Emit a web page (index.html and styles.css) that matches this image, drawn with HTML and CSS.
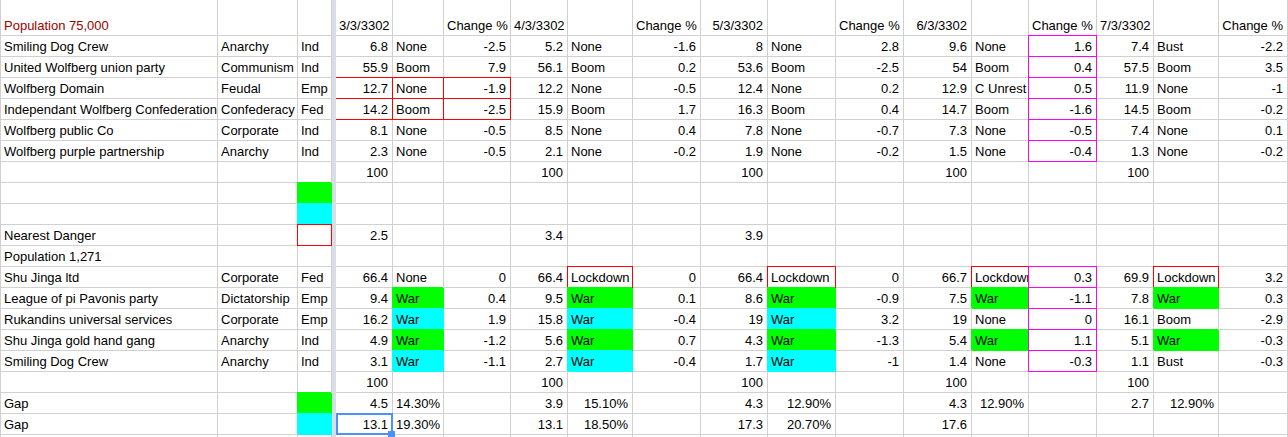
FILE: index.html
```html
<!DOCTYPE html>
<html lang="en">
<head>
<meta charset="utf-8">
<title>Wolfberg influence sheet</title>
<link rel="stylesheet" href="styles.css">
</head>
<body>
<table class="sheet">
<colgroup>
<col class="a"><col class="b"><col class="c"><col class="z"><col class="d"><col class="e"><col class="f"><col class="g"><col class="h"><col class="i"><col class="j"><col class="k"><col class="l"><col class="m"><col class="n"><col class="o"><col class="p"><col class="q"><col class="r">
</colgroup>
<tbody>
<tr class="head"><td class="first pop">Population 75,000</td><td></td><td></td><td class="z"></td><td class="n">3/3/3302</td><td></td><td class="n">Change %</td><td class="n">4/3/3302</td><td></td><td class="n">Change %</td><td class="n">5/3/3302</td><td></td><td class="n">Change %</td><td class="n">6/3/3302</td><td></td><td class="n">Change %</td><td class="n">7/3/3302</td><td></td><td class="n">Change %</td></tr>
<tr><td class="first">Smiling Dog Crew</td><td>Anarchy</td><td>Ind</td><td class="z"></td><td class="n">6.8</td><td>None</td><td class="n">-2.5</td><td class="n">5.2</td><td>None</td><td class="n">-1.6</td><td class="n">8</td><td>None</td><td class="n">2.8</td><td class="n">9.6</td><td>None</td><td class="n pk">1.6</td><td class="n">7.4</td><td>Bust</td><td class="n">-2.2</td></tr>
<tr><td class="first">United Wolfberg union party</td><td>Communism</td><td>Ind</td><td class="z"></td><td class="n">55.9</td><td>Boom</td><td class="n">7.9</td><td class="n">56.1</td><td>Boom</td><td class="n">0.2</td><td class="n">53.6</td><td>Boom</td><td class="n">-2.5</td><td class="n">54</td><td>Boom</td><td class="n pk">0.4</td><td class="n">57.5</td><td>Boom</td><td class="n">3.5</td></tr>
<tr><td class="first">Wolfberg Domain</td><td>Feudal</td><td>Emp</td><td class="z"></td><td class="n rd edge">12.7</td><td class="rd">None</td><td class="n rd">-1.9</td><td class="n">12.2</td><td>None</td><td class="n">-0.5</td><td class="n">12.4</td><td>None</td><td class="n">0.2</td><td class="n">12.9</td><td>C Unrest</td><td class="n pk">0.5</td><td class="n">11.9</td><td>None</td><td class="n">-1</td></tr>
<tr><td class="first">Independant Wolfberg Confederation</td><td>Confederacy</td><td>Fed</td><td class="z"></td><td class="n rd edge">14.2</td><td class="rd">Boom</td><td class="n rd">-2.5</td><td class="n">15.9</td><td>Boom</td><td class="n">1.7</td><td class="n">16.3</td><td>Boom</td><td class="n">0.4</td><td class="n">14.7</td><td>Boom</td><td class="n pk">-1.6</td><td class="n">14.5</td><td>Boom</td><td class="n">-0.2</td></tr>
<tr><td class="first">Wolfberg public Co</td><td>Corporate</td><td>Ind</td><td class="z"></td><td class="n">8.1</td><td>None</td><td class="n">-0.5</td><td class="n">8.5</td><td>None</td><td class="n">0.4</td><td class="n">7.8</td><td>None</td><td class="n">-0.7</td><td class="n">7.3</td><td>None</td><td class="n pk">-0.5</td><td class="n">7.4</td><td>None</td><td class="n">0.1</td></tr>
<tr><td class="first">Wolfberg purple partnership</td><td>Anarchy</td><td>Ind</td><td class="z"></td><td class="n">2.3</td><td>None</td><td class="n">-0.5</td><td class="n">2.1</td><td>None</td><td class="n">-0.2</td><td class="n">1.9</td><td>None</td><td class="n">-0.2</td><td class="n">1.5</td><td>None</td><td class="n pk">-0.4</td><td class="n">1.3</td><td>None</td><td class="n">-0.2</td></tr>
<tr><td class="first"></td><td></td><td></td><td class="z"></td><td class="n">100</td><td></td><td></td><td class="n">100</td><td></td><td></td><td class="n">100</td><td></td><td></td><td class="n">100</td><td></td><td></td><td class="n">100</td><td></td><td></td></tr>
<tr><td class="first"></td><td></td><td class="gr"></td><td class="z"></td><td></td><td></td><td></td><td></td><td></td><td></td><td></td><td></td><td></td><td></td><td></td><td></td><td></td><td></td><td></td></tr>
<tr><td class="first"></td><td></td><td class="cy"></td><td class="z"></td><td></td><td></td><td></td><td></td><td></td><td></td><td></td><td></td><td></td><td></td><td></td><td></td><td></td><td></td><td></td></tr>
<tr><td class="first">Nearest Danger</td><td></td><td class="rd"></td><td class="z"></td><td class="n">2.5</td><td></td><td></td><td class="n">3.4</td><td></td><td></td><td class="n">3.9</td><td></td><td></td><td></td><td></td><td></td><td></td><td></td><td></td></tr>
<tr><td class="first">Population 1,271</td><td></td><td></td><td class="z"></td><td></td><td></td><td></td><td></td><td></td><td></td><td></td><td></td><td></td><td></td><td></td><td></td><td></td><td></td><td></td></tr>
<tr><td class="first">Shu Jinga ltd</td><td>Corporate</td><td>Fed</td><td class="z"></td><td class="n">66.4</td><td>None</td><td class="n">0</td><td class="n">66.4</td><td class="rd">Lockdown</td><td class="n">0</td><td class="n">66.4</td><td class="rd">Lockdown</td><td class="n">0</td><td class="n">66.7</td><td class="rd"><span class="clip">Lockdown</span></td><td class="n pk">0.3</td><td class="n">69.9</td><td class="rd">Lockdown</td><td class="n">3.2</td></tr>
<tr><td class="first">League of pi Pavonis party</td><td>Dictatorship</td><td>Emp</td><td class="z"></td><td class="n">9.4</td><td class="gr">War</td><td class="n">0.4</td><td class="n">9.5</td><td class="gr">War</td><td class="n">0.1</td><td class="n">8.6</td><td class="gr">War</td><td class="n">-0.9</td><td class="n">7.5</td><td class="gr">War</td><td class="n pk">-1.1</td><td class="n">7.8</td><td class="gr">War</td><td class="n">0.3</td></tr>
<tr><td class="first">Rukandins universal services</td><td>Corporate</td><td>Emp</td><td class="z"></td><td class="n">16.2</td><td class="cy">War</td><td class="n">1.9</td><td class="n">15.8</td><td class="cy">War</td><td class="n">-0.4</td><td class="n">19</td><td class="cy">War</td><td class="n">3.2</td><td class="n">19</td><td>None</td><td class="n pk">0</td><td class="n">16.1</td><td>Boom</td><td class="n">-2.9</td></tr>
<tr><td class="first">Shu Jinga gold hand gang</td><td>Anarchy</td><td>Ind</td><td class="z"></td><td class="n">4.9</td><td class="gr">War</td><td class="n">-1.2</td><td class="n">5.6</td><td class="gr">War</td><td class="n">0.7</td><td class="n">4.3</td><td class="gr">War</td><td class="n">-1.3</td><td class="n">5.4</td><td class="gr">War</td><td class="n pk">1.1</td><td class="n">5.1</td><td class="gr">War</td><td class="n">-0.3</td></tr>
<tr><td class="first">Smiling Dog Crew</td><td>Anarchy</td><td>Ind</td><td class="z"></td><td class="n">3.1</td><td class="cy">War</td><td class="n">-1.1</td><td class="n">2.7</td><td class="cy">War</td><td class="n">-0.4</td><td class="n">1.7</td><td class="cy">War</td><td class="n">-1</td><td class="n">1.4</td><td>None</td><td class="n pk">-0.3</td><td class="n">1.1</td><td>Bust</td><td class="n">-0.3</td></tr>
<tr><td class="first"></td><td></td><td></td><td class="z"></td><td class="n">100</td><td></td><td></td><td class="n">100</td><td></td><td></td><td class="n">100</td><td></td><td></td><td class="n">100</td><td></td><td></td><td class="n">100</td><td></td><td></td></tr>
<tr><td class="first">Gap</td><td></td><td class="gr"></td><td class="z"></td><td class="n">4.5</td><td class="n">14.30%</td><td></td><td class="n">3.9</td><td class="n">15.10%</td><td></td><td class="n">4.3</td><td class="n">12.90%</td><td></td><td class="n">4.3</td><td class="n">12.90%</td><td></td><td class="n">2.7</td><td class="n">12.90%</td><td></td></tr>
<tr><td class="first">Gap</td><td></td><td class="cy"></td><td class="z"></td><td class="n sel">13.1</td><td class="n">19.30%</td><td></td><td class="n">13.1</td><td class="n">18.50%</td><td></td><td class="n">17.3</td><td class="n">20.70%</td><td></td><td class="n">17.6</td><td></td><td></td><td></td><td></td><td></td></tr>
<tr><td class="first"></td><td></td><td></td><td class="z"></td><td></td><td></td><td></td><td></td><td></td><td></td><td></td><td></td><td></td><td></td><td></td><td></td><td></td><td></td><td></td></tr>
</tbody>
</table>
</body>
</html>
```
FILE: styles.css
```css
html, body {
  margin: 0;
  padding: 0;
  background: #fff;
  overflow: hidden;
  height: 437px;
}

.sheet {
  border-collapse: separate;
  border-spacing: 0;
  table-layout: fixed;
  width: 1288px;
  font-family: "Liberation Sans", Arial, sans-serif;
  font-size: 13px;
  color: #000;
}

col.a { width: 218px; }
col.b { width: 80px; }
col.c { width: 34px; }
col.z { width: 4px; }
col.d { width: 57px; }
col.e { width: 51px; }
col.f { width: 67px; }
col.g { width: 57px; }
col.h { width: 65px; }
col.i { width: 68px; }
col.j { width: 67px; }
col.k { width: 68px; }
col.l { width: 68px; }
col.m { width: 68px; }
col.n { width: 57px; }
col.o { width: 68px; }
col.p { width: 57px; }
col.q { width: 65px; }
col.r { width: 69px; }

.sheet td {
  box-sizing: border-box;
  height: 21px;
  padding: 0 3px;
  border-right: 1px solid #d0d0d0;
  border-bottom: 1px solid #d0d0d0;
  white-space: nowrap;
  overflow: hidden;
  vertical-align: bottom;
  line-height: 19px;
  position: relative;
}

.sheet .head td {
  height: 36px;
}

.sheet td.first {
  border-left: 1px solid #d0d0d0;
}

.sheet td.pop {
  color: #980000;
}

.sheet td.n {
  text-align: right;
  padding-right: 4px;
}

.sheet td.z {
  padding: 0;
  background: #d9dde6;
  border: 0;
}

.sheet td.gr {
  background: #00ff00;
  border-color: #00ff00;
  box-shadow: -1px -1px 0 #00ff00;
}

.sheet td.cy {
  background: #00ffff;
  border-color: #00ffff;
  box-shadow: -1px -1px 0 #00ffff;
}

/* coloured cell borders sit over the shared grid lines */
.sheet td.rd,
.sheet td.pk,
.sheet td.sel {
  overflow: visible;
}

.clip {
  display: block;
  overflow: hidden;
  margin-right: -3px;
}

.sheet td.rd::after,
.sheet td.pk::after {
  content: "";
  position: absolute;
  top: -1px;
  left: -1px;
  right: -1px;
  bottom: -1px;
  border: 1px solid #ff0000;
  pointer-events: none;
}

.sheet td.pk::after {
  border-color: #ff00ff;
}

.sheet td.rd.edge::after {
  left: 0;
  border-left: 0;
}

.sheet td.sel::after {
  content: "";
  position: absolute;
  top: -1px;
  left: 0;
  right: -1px;
  bottom: -1px;
  border: 2px solid #4d90fe;
}

.sheet td.sel::before {
  content: "";
  position: absolute;
  right: -3px;
  bottom: -3px;
  width: 7px;
  height: 6px;
  background: #4d90fe;
  z-index: 1;
}
```
